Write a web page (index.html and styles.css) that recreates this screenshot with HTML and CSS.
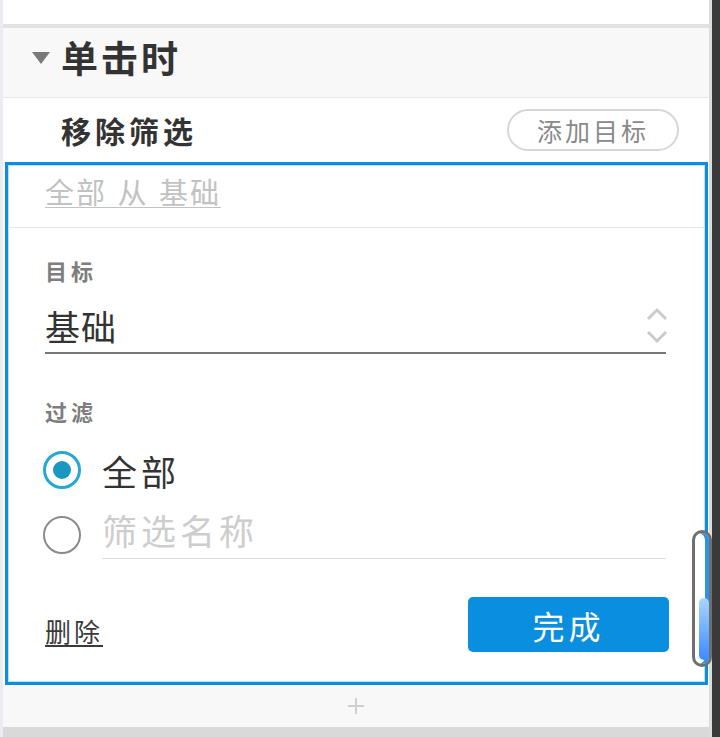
FILE: index.html
```html
<!DOCTYPE html>
<html lang="zh-CN">
<head>
    <meta charset="UTF-8">
    <meta name="viewport" content="width=device-width, initial-scale=1.0">
    <title>单击时 - 移除筛选</title>
    <link rel="stylesheet" href="styles.css">
</head>
<body>
    <div class="app">
        <div class="edge"></div>

        <div class="panel">
            <div class="spacer"></div>

            <div class="section-head">
                <span class="caret"></span>
                <h2 class="section-title">单击时</h2>
            </div>

            <div class="action-row">
                <span class="action-name">移除筛选</span>
                <button class="pill-btn">添加目标</button>
            </div>

            <div class="editor">
                <div class="summary">
                    <a href="#" class="summary-link">全部 从 基础</a>
                </div>

                <div class="editor-body">
                    <div class="field-label">目标</div>
                    <div class="select">
                        <span class="select-value">基础</span>
                        <svg class="select-arrows" width="22" height="38" viewBox="0 0 22 38">
                            <polyline points="2,12 11,3 20,12" fill="none" stroke="#cbcbcb" stroke-width="3"/>
                            <polyline points="2,25 11,34 20,25" fill="none" stroke="#cbcbcb" stroke-width="3"/>
                        </svg>
                    </div>

                    <div class="field-label filter-label">过滤</div>
                    <label class="radio-row">
                        <span class="radio checked"></span>
                        <span class="radio-text">全部</span>
                    </label>
                    <label class="radio-row second">
                        <span class="radio"></span>
                        <span class="filter-input">筛选名称</span>
                    </label>

                    <div class="editor-foot">
                        <a href="#" class="delete-link">删除</a>
                        <button class="done-btn">完成</button>
                    </div>
                </div>

                <!-- scrollbar overlay -->
                <div class="scrollbar"><div class="scroll-thumb"></div></div>
            </div>

            <div class="add-row">
                <svg width="18" height="18" viewBox="0 0 18 18">
                    <line x1="9" y1="1" x2="9" y2="17" stroke="#cfcfcf" stroke-width="2"/>
                    <line x1="1" y1="9" x2="17" y2="9" stroke="#cfcfcf" stroke-width="2"/>
                </svg>
            </div>
            <div class="panel-bottom"></div>
        </div>

        <div class="gutter"></div>
    </div>
</body>
</html>
```

FILE: styles.css
```css
body {
    margin: 0;
    font-family: "Noto Sans CJK SC", "Noto Sans", sans-serif;
    color: #333;
    background: #fff;
    overflow: hidden;
}
.app {
    display: flex;
    width: 720px;
    height: 737px;
}
.edge {
    width: 3px;
    background: #ebebf2;
}
.panel {
    flex: 1;
    display: flex;
    flex-direction: column;
    border-right: 3px solid #dcdcdc;
}
.gutter {
    width: 8px;
    background: #3a3a3a;
}
.spacer {
    height: 24px;
}
.section-head {
    height: 74px;
    display: flex;
    align-items: center;
    padding: 0 0 10px 29px;
    box-sizing: border-box;
    background: #f8f8f8;
    border-top: 4px solid #e2e2e2;
    border-bottom: 1px solid #e8e8e8;
}
.caret {
    width: 0;
    height: 0;
    border-left: 9px solid transparent;
    border-right: 9px solid transparent;
    border-top: 12px solid #7a7a7a;
    margin-right: 11px;
}
.section-title {
    margin: 0;
    font-size: 37px;
    font-weight: bold;
    letter-spacing: 3px;
    line-height: 1.2;
    color: #333;
}
.action-row {
    height: 64px;
    display: flex;
    align-items: center;
    justify-content: space-between;
    padding: 0 30px 0 58px;
}
.action-name {
    font-size: 30px;
    font-weight: bold;
    letter-spacing: 4px;
    color: #333;
}
.pill-btn {
    width: 172px;
    height: 42px;
    border: 2px solid #d6d6d6;
    border-radius: 21px;
    background: #fff;
    font-family: inherit;
    font-size: 25px;
    letter-spacing: 3px;
    color: #8a8a8a;
    padding: 0;
    line-height: 1;
}
.editor {
    position: relative;
    margin: 0 1px 0 2px;
    border: 3px solid #0b8de0;
    box-shadow: inset 0 0 0 1px #bfe1f6;
    background: #fff;
}
.summary {
    height: 63px;
    display: flex;
    align-items: center;
    padding: 0 0 10px 37px;
    box-sizing: border-box;
    border-bottom: 1px solid #e6e6e6;
}
.summary-link {
    font-size: 29px;
    letter-spacing: 2px;
    word-spacing: 2px;
    color: #c2c2c2;
    text-decoration: underline;
    text-decoration-thickness: 1px;
    text-underline-offset: 3px;
}
.editor-body {
    padding: 0 39px 30px 37px;
}
.field-label {
    margin-top: 28px;
    font-size: 22px;
    line-height: 29px;
    font-weight: bold;
    letter-spacing: 4px;
    color: #7d7d7d;
}
.filter-label {
    margin-top: 43px;
}
.select {
    margin-top: 19px;
    display: flex;
    align-items: center;
    justify-content: space-between;
    padding-bottom: 4px;
    border-bottom: 2px solid #777;
}
.select-value {
    font-size: 35px;
    line-height: 44px;
    letter-spacing: 1px;
    color: #333;
}
.select-arrows {
    margin-right: -2px;
}
.radio-row {
    height: 50px;
    display: flex;
    align-items: center;
    gap: 21px;
    margin-top: 19px;
}
.radio-row.second {
    margin-top: 15px;
}
.radio {
    width: 38px;
    height: 38px;
    margin-left: -2px;
    border: 2px solid #8a8a8a;
    border-radius: 50%;
    box-sizing: border-box;
    flex: none;
    position: relative;
}
.radio.checked {
    border: 3px solid #27a8d0;
}
.radio.checked::after {
    content: "";
    position: absolute;
    left: 7px;
    top: 7px;
    width: 18px;
    height: 18px;
    border-radius: 50%;
    background: #1b98c2;
}
.radio-text {
    font-size: 35px;
    letter-spacing: 4px;
    color: #333;
}
.filter-input {
    flex: 1;
    height: 48px;
    line-height: 40px;
    font-size: 35px;
    letter-spacing: 4px;
    color: #cdcdcd;
    border-bottom: 1px solid #dcdcdc;
    align-self: flex-start;
}
.editor-foot {
    margin-top: 37px;
    display: flex;
    align-items: center;
    justify-content: space-between;
}
.delete-link {
    font-size: 26px;
    letter-spacing: 3px;
    color: #3a3a3a;
    text-decoration: underline;
    text-underline-offset: 3px;
    margin-top: 12px;
}
.done-btn {
    width: 201px;
    height: 55px;
    margin-right: -3px;
    border: none;
    border-radius: 5px;
    background: #0a8fe0;
    color: #fff;
    font-family: inherit;
    font-size: 32px;
    letter-spacing: 4px;
    padding: 0;
    line-height: 1;
}
.scrollbar {
    position: absolute;
    left: 684px;
    top: 365px;
    width: 20px;
    height: 137px;
    border: 3px solid #6f6f6f;
    border-radius: 10px;
    box-sizing: border-box;
    background: #fff;
    box-shadow: inset -4px 0 0 #2a94e8;
    overflow: hidden;
}
.scroll-thumb {
    position: absolute;
    left: 4px;
    right: 0;
    bottom: 4px;
    height: 62px;
    border-radius: 6px;
    background: linear-gradient(#a7d5ff, #3d8bff);
}
.add-row {
    height: 42px;
    display: flex;
    align-items: center;
    justify-content: center;
    background: #f8f8f8;
}
.panel-bottom {
    flex: 1;
    background: #d9d9d9;
}
```
